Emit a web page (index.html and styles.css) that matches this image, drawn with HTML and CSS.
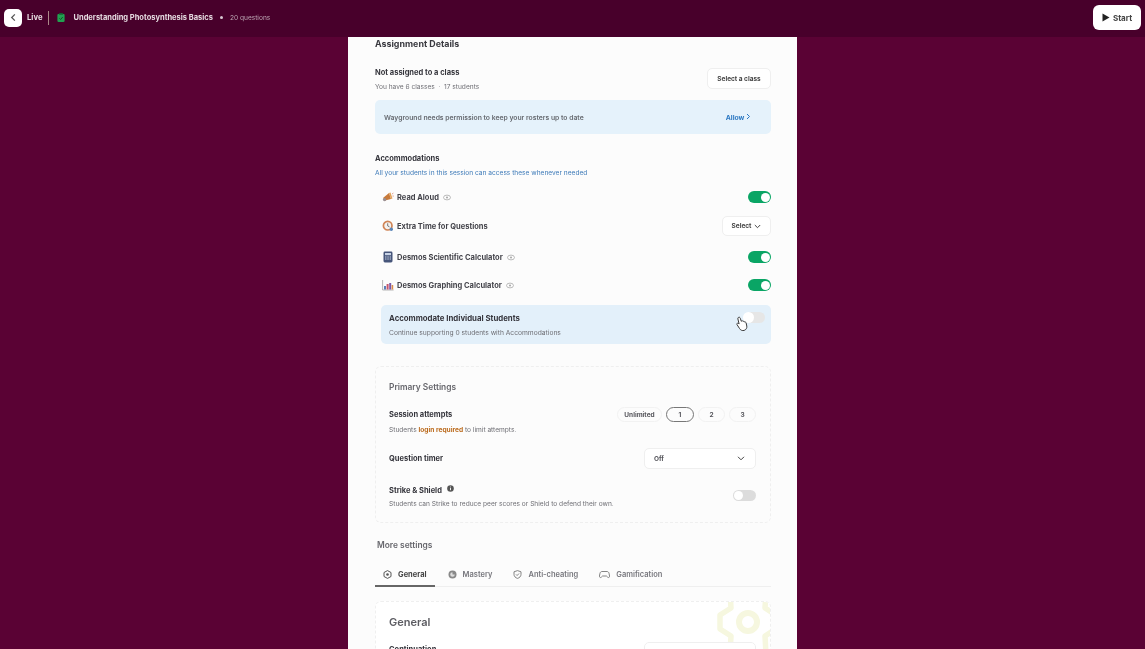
FILE: index.html
```html
<!DOCTYPE html>
<html lang="en">
<head>
<meta charset="utf-8">
<title>Understanding Photosynthesis Basics</title>
<link rel="stylesheet" href="styles.css">
</head>
<body>
<header class="topbar">
  <div class="topbar-left">
    <button class="back-btn" aria-label="Back"><svg width="9" height="9" viewBox="0 0 10 10"><path d="M6.500 1.500 3 5l3.500 3.500" fill="none" stroke="#555" stroke-width="1.400"/></svg></button>
    <span class="live">Live</span>
    <span class="divider"></span>
    <svg class="quiz-icon" width="8" height="11" viewBox="0 0 10 12"><rect x=".5" y="1.500" width="9" height="10" rx="1.500" fill="#22a050"/><rect x="2.500" y=".3" width="5" height="2.400" rx=".8" fill="#145f30"/><path d="M3 7l1.500 1.500L7.200 5.400" fill="none" stroke="#0d3d1e" stroke-width="1"/></svg>
    <span class="quiz-title">Understanding Photosynthesis Basics</span>
    <span class="dot"></span>
    <span class="quiz-count">20 questions</span>
  </div>
  <button class="start-btn"><svg width="8" height="9" viewBox="0 0 8 9"><path d="M.5.5 7.500 4.500.5 8.500Z" fill="#222"/></svg>Start</button>
</header>

<main class="panel">
  <h2 class="title-main">Assignment Details</h2>

  <section class="class-row">
    <div>
      <div class="strong">Not assigned to a class</div>
      <div class="sub class-sub">You have 6 classes &nbsp;·&nbsp; 17 students</div>
    </div>
    <button class="btn class-btn">Select a class</button>
  </section>

  <section class="notice">
    <span>Wayground needs permission to keep your rosters up to date</span>
    <span class="allow">Allow <svg width="5" height="7" viewBox="0 0 5 7"><path d="M1 1l2.500 2.500L1 6" fill="none" stroke="#2b78c2" stroke-width="1"/></svg></span>
  </section>

  <h3 class="strong acc-title">Accommodations</h3>
  <p class="acc-sub">All your students in this session can access these whenever needed</p>

  <div class="acc-row row-a">
    <span class="acc-label"><svg class="emoji" width="12" height="12" viewBox="0 0 12 12"><path d="M1 7l6-5 2 6-6 1.500Z" fill="#c87a3a"/><path d="M7 2l2 6 1.500-.5L8.500 1.500Z" fill="#e2a35c"/><circle cx="2.600" cy="8.600" r="1.700" fill="#9a8f92"/><path d="M10 3l1.400-.9M10.500 5l1.300.1" stroke="#d9795c" stroke-width=".7"/></svg>Read Aloud<svg class="eye" width="8" height="7" viewBox="0 0 9 7"><ellipse cx="4.500" cy="3.500" rx="3.900" ry="2.700" fill="none" stroke="#aaa" stroke-width=".9"/><circle cx="4.500" cy="3.500" r="1.200" fill="#aaa"/></svg></span>
    <span class="toggle on"></span>
  </div>
  <div class="acc-row row-b">
    <span class="acc-label"><svg class="emoji" width="12" height="12" viewBox="0 0 12 12"><circle cx="5.700" cy="5.700" r="4.300" fill="#f4f1ee" stroke="#d08455" stroke-width="1.700"/><path d="M5.700 3.300v2.600l1.800 1" fill="none" stroke="#555" stroke-width=".8"/><circle cx="9.300" cy="9.300" r="1.700" fill="#5b86b8"/></svg>Extra Time for Questions</span>
    <button class="btn select-mini">Select <svg width="7" height="5" viewBox="0 0 7 5"><path d="M.8 1l2.700 2.700L6.200 1" fill="none" stroke="#444" stroke-width="1"/></svg></button>
  </div>
  <div class="acc-row row-c">
    <span class="acc-label"><svg class="emoji" width="12" height="12" viewBox="0 0 12 12"><rect x="1.500" y=".5" width="9" height="11" rx="1.400" fill="#46557a"/><rect x="3" y="2" width="6" height="2.200" fill="#c8d3e6"/><path d="M3 6h1.500M5.300 6h1.500M7.600 6h1.400M3 8h1.500M5.300 8h1.500M7.600 8h1.400" stroke="#c8d3e6" stroke-width="1"/></svg>Desmos Scientific Calculator<svg class="eye" width="8" height="7" viewBox="0 0 9 7"><ellipse cx="4.500" cy="3.500" rx="3.900" ry="2.700" fill="none" stroke="#aaa" stroke-width=".9"/><circle cx="4.500" cy="3.500" r="1.200" fill="#aaa"/></svg></span>
    <span class="toggle on"></span>
  </div>
  <div class="acc-row row-d">
    <span class="acc-label"><svg class="emoji" width="12" height="12" viewBox="0 0 12 12"><path d="M.6 1v10h11" fill="none" stroke="#999" stroke-width=".7"/><rect x="2" y="7" width="2" height="3.500" fill="#5b7fb8"/><rect x="4.600" y="5" width="2" height="5.500" fill="#c9556a"/><rect x="7.200" y="4" width="2" height="6.500" fill="#7a5aa8"/><rect x="9.600" y="6" width="1.600" height="4.500" fill="#d98c4a"/></svg>Desmos Graphing Calculator<svg class="eye" width="8" height="7" viewBox="0 0 9 7"><ellipse cx="4.500" cy="3.500" rx="3.900" ry="2.700" fill="none" stroke="#aaa" stroke-width=".9"/><circle cx="4.500" cy="3.500" r="1.200" fill="#aaa"/></svg></span>
    <span class="toggle on"></span>
  </div>

  <section class="individual">
    <div>
      <div class="strong individual-title">Accommodate Individual Students</div>
      <div class="sub individual-sub">Continue supporting 0 students with Accommodations</div>
    </div>
    <span class="toggle pale"></span>
    <svg class="cursor" width="14" height="16" viewBox="0 0 14 16"><path d="M3.400 1.400c.9-.5 1.600 0 1.900.9l1 3 .5-.4c.6-.3 1.200 0 1.400.5.6-.3 1.200 0 1.400.6.7-.2 1.300.2 1.500.9l.7 3.200c.3 1.800-.7 3.700-2.600 4.300-1.900.5-3.600-.1-4.600-1.800L2 8.600c-.4-.7 0-1.400.7-1.400.5 0 1 .3 1.400.8L2.900 2.900c-.2-.6 0-1.200.5-1.500Z" fill="#fff" stroke="#3a3a3a" stroke-width="1"/></svg>
  </section>

  <section class="primary">
    <h3 class="section-head">Primary Settings</h3>
    <div class="setting attempts">
      <div>
        <div class="strong">Session attempts</div>
        <div class="sub attempts-sub">Students <b class="login">login required</b> to limit attempts.</div>
      </div>
      <div class="pills">
        <span class="pill unlimited">Unlimited</span>
        <span class="pill active">1</span>
        <span class="pill">2</span>
        <span class="pill">3</span>
      </div>
    </div>
    <div class="setting timer">
      <div class="strong">Question timer</div>
      <div class="dropdown"><span>Off</span><svg width="8" height="5" viewBox="0 0 8 5"><path d="M1 .8 4 3.800 7 .8" fill="none" stroke="#444" stroke-width="1"/></svg></div>
    </div>
    <div class="setting strike">
      <div>
        <div class="strong">Strike &amp; Shield <svg class="info" width="7" height="7" viewBox="0 0 7 7"><circle cx="3.500" cy="3.500" r="3.300" fill="#555"/><path d="M3.500 3v2.200M3.500 1.600v.8" stroke="#fff" stroke-width=".9"/></svg></div>
        <div class="sub strike-sub">Students can Strike to reduce peer scores or Shield to defend their own.</div>
      </div>
      <span class="toggle off"></span>
    </div>
  </section>

  <h3 class="section-head more">More settings</h3>

  <nav class="tabs">
    <span class="tab current"><svg width="9" height="9" viewBox="0 0 9 9"><path d="M4.500.6 8 2.500v4L4.500 8.400 1 6.500v-4Z" fill="none" stroke="#555" stroke-width="1"/><circle cx="4.500" cy="4.500" r="1.300" fill="#555"/></svg>General</span>
    <span class="tab"><svg width="9" height="9" viewBox="0 0 9 9"><circle cx="4.500" cy="4.500" r="4" fill="#888"/><path d="M4.500 2.200a2.300 2.300 0 1 0 2.300 2.300H4.500Z" fill="#ddd"/></svg>Mastery</span>
    <span class="tab"><svg width="9" height="9" viewBox="0 0 9 9"><path d="M4.500.6 8 1.800v2.600c0 2-1.500 3.400-3.500 4C2.500 7.800 1 6.400 1 4.400V1.800Z" fill="none" stroke="#777" stroke-width=".9"/><path d="M3 4.400l1.100 1.100L6 3.500" fill="none" stroke="#777" stroke-width=".9"/></svg>Anti-cheating</span>
    <span class="tab"><svg width="11" height="9" viewBox="0 0 11 9"><path d="M3 1.500h5c1 0 1.700.7 2 1.700l.6 3c.2 1.200-1.200 1.800-2 .9L7.400 6H3.600L2.400 7.100c-.8.900-2.200.3-2-.9l.6-3c.3-1 1-1.700 2-1.700Z" fill="none" stroke="#777" stroke-width=".9"/></svg>Gamification</span>
  </nav>

  <section class="general">
    <svg class="gear" width="64" height="64" viewBox="0 0 64 64"><circle cx="32" cy="32" r="9" fill="none" stroke="#f6f7df" stroke-width="6"/><path d="M14 2 15 18 4 25V39L15 46 14 64M50 2 49 18 60 25V39L49 46 50 64" fill="none" stroke="#f6f7df" stroke-width="5.500" stroke-linejoin="round"/></svg>
    <h3 class="general-title">General</h3>
    <div class="setting cont">
      <div class="strong">Continuation</div>
      <div class="dropdown"><span>Allow</span></div>
    </div>
  </section>
</main>
</body>
</html>
```
FILE: styles.css
```css
* { box-sizing: border-box; }
html, body { height: 100%; }
body {
  margin: 0;
  height: 649px;
  overflow: hidden;
  background: #5a0234;
  font-family: Inter, "Noto Sans", sans-serif;
  font-size: 7.5px;
  color: #3d3d44;
}
h2, h3, p { margin: 0; }
button { font-family: inherit; padding: 0; cursor: pointer; }

.topbar {
  height: 37px;
  background: #48002b;
  display: flex;
  align-items: center;
  justify-content: space-between;
  padding: 0 4px 2px;
  filter: blur(.35px);
}
.topbar-left { display: flex; align-items: center; }
.back-btn {
  width: 18px; height: 18px; border: 0; border-radius: 5px; background: #fff;
  display: flex; align-items: center; justify-content: center;
}
.live { margin-left: 5px; font-size: 7.700px; font-weight: 700; color: #e6dbe1; }
.divider { width: 1px; height: 14px; background: #a88; margin: 0 8px 0 6px; }
.quiz-icon { margin-right: 8px; }
.quiz-title { font-size: 7.500px; font-weight: 700; color: #e6dbe1; }
.dot { width: 3px; height: 3px; border-radius: 50%; background: #d8c8d2; margin: 0 7px; }
.quiz-count { font-size: 6.600px; color: #bda6b4; }
.start-btn {
  width: 48px; height: 25px; border: 0; border-radius: 6px; background: #fff;
  display: flex; align-items: center; justify-content: center; gap: 3px;
  font-size: 8px; font-weight: 700; color: #444;
}

.panel {
  width: 449px;
  height: 612px;
  margin-left: 348px;
  padding: 0 26px 0 27px;
  background: #fcfcfc;
  overflow: hidden;
  filter: blur(.35px);
}
.title-main { font-size: 8.900px; font-weight: 700; line-height: 14px; color: #3a3a40; }
.strong { font-size: 7.500px; font-weight: 700; line-height: 10px; color: #35353c; }
.sub { font-size: 6.600px; line-height: 9px; color: #6e6e74; }

.class-row { display: flex; justify-content: space-between; align-items: flex-start; margin-top: 17px; height: 21px; }
.class-sub { margin-top: 5px; }
.btn {
  border: 1px solid #efefef; border-radius: 5px; background: #fff;
  font-size: 6.500px; font-weight: 700; color: #444;
}
.class-btn { width: 64px; height: 21px; }

.notice {
  display: flex; justify-content: space-between; align-items: center;
  height: 34px; margin-top: 11px; padding: 0 20px 0 9px;
  background: #e5f2fb; border-radius: 5px;
  font-size: 6.800px; font-weight: 600; color: #666a70;
}
.allow { font-weight: 700; color: #2b78c2; }

.acc-title { margin-top: 20px; }
.acc-sub { margin-top: 5px; font-size: 6.600px; line-height: 9px; color: #3d7ab8; }

.acc-row { display: flex; justify-content: space-between; align-items: center; padding-left: 7px; }
.row-a { height: 16px; margin-top: 11px; }
.row-b { height: 20px; margin-top: 11px; }
.row-c { height: 16px; margin-top: 13px; }
.row-d { height: 16px; margin-top: 12px; }
.acc-label { display: flex; align-items: center; font-size: 7.500px; font-weight: 700; color: #43434a; }
.emoji { margin-right: 3px; }
.eye { margin-left: 4px; }

.toggle { display: block; position: relative; width: 23px; height: 12px; border-radius: 6px; }
.toggle::after { content: ""; position: absolute; top: 1.500px; right: 1.500px; width: 9px; height: 9px; border-radius: 50%; background: #fff; }
.toggle.on { background: #0aa565; }
.toggle.off { height: 11px; margin-top: 5px; background: #dcdcdc; }
.toggle.off::after { right: auto; left: 1px; top: 1px; width: 9px; height: 9px; }
.toggle.pale { position: absolute; top: 7px; right: 6px; width: 20px; height: 11px; background: #e6e6e6; }
.toggle.pale::after { right: auto; left: -2px; top: 0; width: 11px; height: 11px; }

.select-mini {
  width: 49px; height: 20px;
  display: flex; align-items: center; justify-content: center; gap: 3px;
}

.individual {
  position: relative;
  height: 39px; margin: 12px 0 0 6px; padding: 8px 8px;
  background: #e3f0fa; border-radius: 5px;
}
.individual-title { font-size: 7.800px; }
.individual-sub { margin-top: 6px; font-size: 6.700px; }
.cursor { position: absolute; left: 354px; top: 11px; }

.primary {
  height: 157px; margin-top: 22px; padding: 14px 14px 0 13px;
  border: 1px dashed #efefef; border-radius: 6px;
}
.section-head { font-size: 8.400px; font-weight: 600; line-height: 12px; color: #66666c; }
.setting { display: flex; justify-content: space-between; }
.attempts { margin-top: 17px; height: 34px; }
.attempts-sub { margin-top: 6px; }
.login { color: #bb6a1c; font-weight: 700; }
.pills { display: flex; gap: 4px; margin-top: -3px; }
.pill {
  width: 27px; height: 15px; display: flex; align-items: center; justify-content: center;
  border: 1px solid #f2f2f2; border-radius: 8px; font-size: 6.500px; font-weight: 700; color: #55555b;
}
.pill.unlimited { width: 45px; }
.pill.active { width: 28px; border-color: #777; }
.timer { align-items: center; height: 21px; margin-top: 4px; }
.dropdown {
  width: 112px; height: 21px; padding: 0 10px 0 9px;
  display: flex; align-items: center; justify-content: space-between;
  border: 1px solid #efefef; border-radius: 5px; background: #fff;
  font-size: 6.500px; font-weight: 700; color: #55555b;
}
.strike { align-items: flex-start; margin-top: 16px; }
.info { margin-left: 3px; vertical-align: 1px; }
.strike-sub { margin-top: 4px; }

.more { margin: 16px 0 0 2px; }
.tabs {
  display: flex; height: 27px; margin-top: 9px; padding-top: 2px;
  border-bottom: 1px solid #efefef;
}
.tab {
  display: flex; align-items: center; gap: 6px; padding: 0 8px;
  margin-right: 5px;
  font-size: 7.500px; font-weight: 600; color: #77777d;
}
.tab.current { padding-top: 1px; color: #444; font-weight: 700; border-bottom: 2px solid #666; margin-bottom: -1px; }

.general {
  position: relative;
  height: 70px; margin-top: 14px; padding: 13px 13px 0;
  border: 1px dashed #efefef; border-radius: 6px; background: #fff;
  overflow: hidden;
}
.gear { position: absolute; top: -12px; right: -10px; }
.general-title { position: relative; font-size: 11px; font-weight: 600; line-height: 14px; color: #5c5c62; }
.cont { position: relative; margin-top: 13px; align-items: flex-start; }
.cont .strong { margin-top: 3px; }
.cont .dropdown { margin-right: 1px; }
```
